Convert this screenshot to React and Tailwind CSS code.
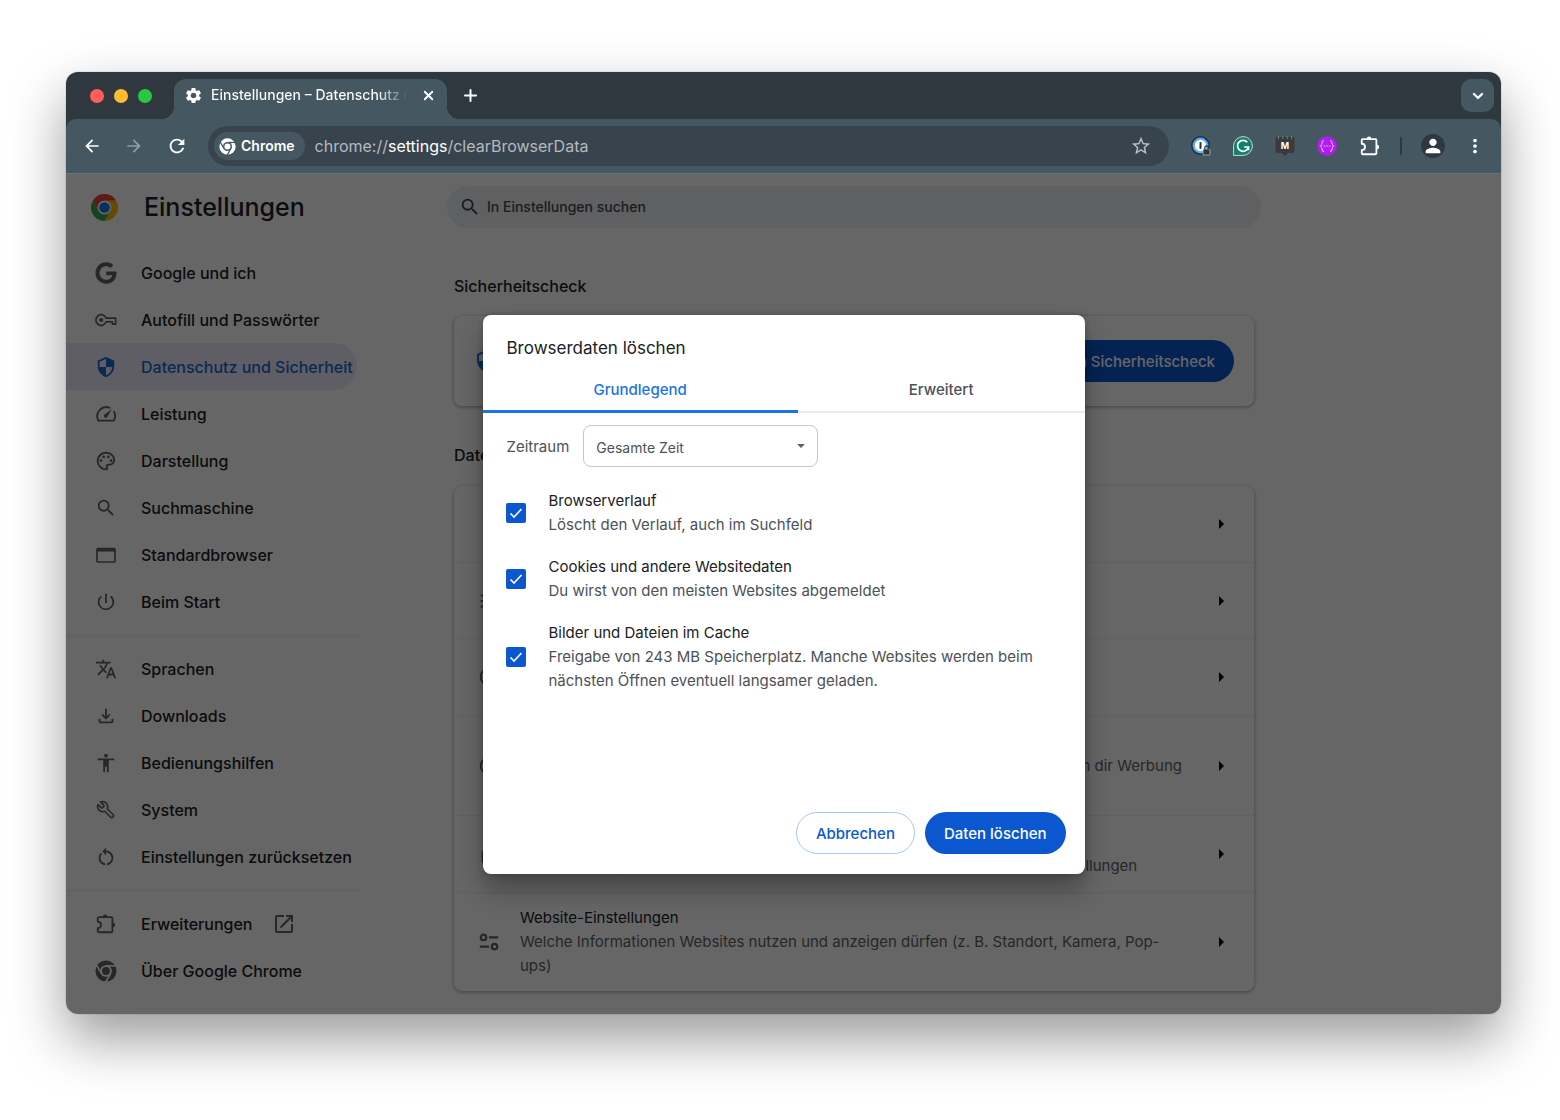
import { useState } from "react";
import {
  MdSettings, MdClose, MdAdd, MdArrowBack, MdArrowForward, MdRefresh, MdStarBorder, MdMoreVert,
  MdSearch, MdSecurity, MdOutlinePalette, MdPowerSettingsNew, MdTranslate,
  MdOutlineFileDownload, MdAccessibility, MdRestartAlt, MdOpenInNew,
  MdArrowRight, MdPerson, MdOutlineDelete, MdTune, MdAccessTime, MdLockOutline,
} from "react-icons/md";
import { FaGoogle } from "react-icons/fa";
import { LuChevronDown, LuPlus, LuWrench, LuX } from "react-icons/lu";

const ChromeMono = ({ className }) => (
  <svg viewBox="0 0 24 24" className={className}>
    <mask id="chrome-gaps">
      <circle cx="12" cy="12" r="11.500" fill="#fff" />
      <g stroke="#000" strokeWidth="1.800">
        <path d="M12 6.300h12" />
        <path d="M12 6.300h12" transform="rotate(120 12 12)" />
        <path d="M12 6.300h12" transform="rotate(240 12 12)" />
      </g>
      <circle cx="12" cy="12" r="6.400" fill="#000" />
      <circle cx="12" cy="12" r="4.300" fill="#fff" />
    </mask>
    <rect width="24" height="24" fill="currentColor" mask="url(#chrome-gaps)" />
  </svg>
);

const ChromeLogo = ({ className }) => (
  <svg viewBox="0 0 48 48" className={className}>
    <circle cx="24" cy="24" r="23" fill="#fff" />
    <path d="M3.200 12A24 24 0 0 1 44.800 12H24a12 12 0 0 0-10.400 18z" fill="#ea4335" />
    <path d="M44.800 12A24 24 0 0 1 24 48l10.400-18A12 12 0 0 0 24 12z" fill="#fbbc04" />
    <path d="M24 48A24 24 0 0 1 3.200 12l10.400 18A12 12 0 0 0 34.400 30z" fill="#34a853" />
    <circle cx="24" cy="24" r="12" fill="#fff" />
    <circle cx="24" cy="24" r="9.400" fill="#1a73e8" />
  </svg>
);

const PuzzleIcon = ({ className }) => (
  <svg viewBox="0 0 24 24" className={className} fill="none" stroke="currentColor" strokeWidth="2" strokeLinejoin="round">
    <path d="M4 4.500h14a1 1 0 0 1 1 1V20a1 1 0 0 1-1 1H4a1 1 0 0 1-1-1v-3.500c2 0 3.500-1.500 3.500-3.500S5 9.500 3 9.500v-4a1 1 0 0 1 1-1z" />
    <path d="M8.500 4a2.500 2.500 0 0 1 5 0zM19.500 10.500a2.500 2.500 0 0 1 0 5z" fill="currentColor" stroke="none" />
  </svg>
);

const KeyIcon = ({ className }) => (
  <svg viewBox="0 0 24 24" className={className} fill="none" stroke="currentColor" strokeWidth="1.800" strokeLinejoin="round">
    <path d="M12.200 10H22.500v6.500h-3.500V14h-6.800A5.800 5.800 0 1 1 12.200 10z" />
    <circle cx="6.800" cy="12" r="2.300" fill="currentColor" stroke="none" />
  </svg>
);

const SpeedIcon = ({ className }) => (
  <svg viewBox="0 0 24 24" className={className} fill="none" stroke="currentColor" strokeWidth="2" strokeLinecap="round">
    <path d="M16 5.200A10 10 0 0 0 3.600 19.200h16.800A10 10 0 0 0 20.800 9.500" />
    <path d="M18.500 6.500l-8 6a2 2 0 1 0 2.800 2.800z" fill="currentColor" stroke="none" />
  </svg>
);

const BrowserIcon = ({ className }) => (
  <svg viewBox="0 0 22 22" className={className} fill="none" stroke="currentColor" strokeWidth="1.700">
    <rect x="2" y="4.500" width="18" height="13.500" rx="1" />
    <path d="M2 6.300h18" strokeWidth="2.500" />
  </svg>
);

const WrenchIcon = ({ className }) => <LuWrench className={"-scale-x-100 p-px " + className} />;

const TuneIcon = ({ className }) => (
  <svg viewBox="0 0 24 24" className={className} fill="none" stroke="currentColor" strokeWidth="2.400">
    <circle cx="6" cy="7" r="3" />
    <path d="M12 7h10M2 17h10" />
    <circle cx="18" cy="17" r="3" />
  </svg>
);

const OnePasswordIcon = () => (
  <svg viewBox="0 0 20 20" className="size-5">
    <circle cx="9.500" cy="9.500" r="9.500" fill="#22303a" />
    <circle cx="9.500" cy="9.500" r="6.800" fill="#fff" stroke="#5aa9f8" strokeWidth="2.200" />
    <rect x="8.500" y="6" width="2" height="7" rx="1" fill="#22303a" />
    <rect x="12" y="13" width="7" height="6" rx="1" fill="#333" stroke="#dfe5e8" strokeWidth=".6" />
    <path d="M13.800 13v-1.500a1.700 1.700 0 0 1 3.400 0V13" fill="none" stroke="#333" strokeWidth="1.200" />
  </svg>
);

const GrammarlyIcon = () => (
  <svg viewBox="0 0 20 20" className="size-5">
    <path d="M.6 19.400V10A9.400 9.400 0 1 1 10 19.400z" fill="#0f806a" stroke="#c5d6d5" strokeWidth="1" />
    <path d="M14.300 6.300A5.500 5.500 0 1 0 15.400 11h-4.200M15.500 10.800v3.400" fill="none" stroke="#fff" strokeWidth="1.700" />
  </svg>
);

const MailIcon = () => (
  <span className="relative flex h-5 w-5 items-start justify-center">
    <svg viewBox="0 0 20 20" className="absolute inset-0">
      <path d="M1.500 1h17a1 1 0 0 1 1 1v13a2 2 0 0 1-2 2H13l-3 3-3-3H2.500a2 2 0 0 1-2-2V2a1 1 0 0 1 1-1z" fill="#3a3a3c" />
      <path d="M3.500 0v3M7.800 0v3M12.200 0v3M16.500 0v3" stroke="#747b80" strokeWidth="1" />
    </svg>
    <span className="relative text-[9px] leading-5 font-bold text-white">M</span>
  </span>
);

const BracesIcon = () => (
  <svg viewBox="0 0 20 20" className="size-5">
    <circle cx="10" cy="10" r="9.800" fill="#b01df0" />
    <path d="M7 4.500c-3 0-1 4.500-3.500 5.500C6 11 4 15.500 7 15.500M13 4.500c3 0 1 4.500 3.500 5.500-2.500 1-.5 5.500-3.500 5.500" fill="none" stroke="#e3a6ff" strokeWidth="1.100" />
    <path d="M6.500 10h7" stroke="#e3a6ff" strokeWidth="1.200" strokeDasharray="2 .8" />
  </svg>
);

const menu = [
  [
    { label: "Google und ich", icon: FaGoogle },
    { label: "Autofill und Passwörter", icon: KeyIcon },
    { label: "Datenschutz und Sicherheit", icon: MdSecurity, active: true },
    { label: "Leistung", icon: SpeedIcon },
    { label: "Darstellung", icon: MdOutlinePalette },
    { label: "Suchmaschine", icon: MdSearch },
    { label: "Standardbrowser", icon: BrowserIcon },
    { label: "Beim Start", icon: MdPowerSettingsNew },
  ],
  [
    { label: "Sprachen", icon: MdTranslate },
    { label: "Downloads", icon: MdOutlineFileDownload },
    { label: "Bedienungshilfen", icon: MdAccessibility },
    { label: "System", icon: WrenchIcon },
    { label: "Einstellungen zurücksetzen", icon: MdRestartAlt },
  ],
  [
    { label: "Erweiterungen", icon: PuzzleIcon, external: true },
    { label: "Über Google Chrome", icon: ChromeMono },
  ],
];

const options = [
  { id: "verlauf", title: "Browserverlauf", text: "Löscht den Verlauf, auch im Suchfeld" },
  { id: "cookies", title: "Cookies und andere Websitedaten", text: "Du wirst von den meisten Websites abgemeldet" },
  {
    id: "cache",
    title: "Bilder und Dateien im Cache",
    text: "Freigabe von 243 MB Speicherplatz. Manche Websites werden beim nächsten Öffnen eventuell langsamer geladen.",
  },
];

const TabStrip = () => (
  <div className="flex h-[47px] items-end bg-[#2e383e] pr-[7px] pl-6">
    <div className="flex h-full w-[84px] items-center gap-[10px]">
      <span className="size-[14px] rounded-full bg-[#ff5f57]" />
      <span className="size-[14px] rounded-full bg-[#febc2e]" />
      <span className="size-[14px] rounded-full bg-[#28c840]" />
    </div>
    <div className="relative flex h-10 w-[273px] items-center rounded-t-xl bg-[#455760] pb-2 pl-[10px] text-white">
      <span className="absolute bottom-0 -left-3 size-3 bg-[radial-gradient(circle_at_0_0,#2e383e_12px,#455760_12px)]" />
      <span className="absolute -right-3 bottom-0 size-3 bg-[radial-gradient(circle_at_100%_0,#2e383e_12px,#455760_12px)]" />
      <MdSettings className="size-[19px]" />
      <span className="ml-2 w-[196px] overflow-hidden bg-linear-to-r from-white from-85% to-transparent bg-clip-text text-sm font-medium whitespace-nowrap text-transparent">
        Einstellungen – Datenschutz und Sicherheit
      </span>
      <button aria-label="Tab schließen" className="ml-[14px]"><LuX className="size-[15px]" strokeWidth={3} /></button>
    </div>
    <button aria-label="Neuer Tab" className="mb-[14px] ml-[14px] text-white"><LuPlus className="size-[19px]" strokeWidth={2.5} /></button>
    <button aria-label="Tabs durchsuchen" className="mb-[7px] ml-auto flex size-[33px] items-center justify-center rounded-[10px] bg-[#455760] text-white">
      <LuChevronDown className="size-4" strokeWidth={3.5} />
    </button>
  </div>
);

const Toolbar = () => (
  <div className="bg-[#2e383e]">
    <div className="flex h-[55px] items-center rounded-t-[10px] border-b border-[#66737c] bg-[#455760] pr-[15px] pl-4 text-white">
      <button aria-label="Zurück"><MdArrowBack className="size-5" /></button>
      <button aria-label="Vor" className="ml-[22px] text-[#929ca2]"><MdArrowForward className="size-5" /></button>
      <button aria-label="Neu laden" className="ml-[22px]"><MdRefresh className="size-[22px]" /></button>
      <div className="ml-5 flex h-10 flex-1 items-center rounded-full bg-[#38444d] pr-[17px] pl-[6px]">
        <span className="flex h-7 items-center gap-[5px] rounded-full bg-[#455760] pr-[10px] pl-[5px] text-sm font-semibold">
          <ChromeMono className="size-[17px]" />
          Chrome
        </span>
        <span className="ml-[10px] flex-1 text-base text-[#b4babe]">
          chrome://<span className="text-white">settings</span>/clearBrowserData
        </span>
        <button aria-label="Lesezeichen" className="text-[#b9bfc3]"><MdStarBorder className="size-[22px]" /></button>
      </div>
      <div className="ml-[22px] flex items-center gap-[22px]">
        <OnePasswordIcon />
        <GrammarlyIcon />
        <MailIcon />
        <BracesIcon />
        <PuzzleIcon className="size-[22px]" />
      </div>
      <span className="ml-[19px] h-[18px] w-[2px] rounded-full bg-[#2e383e]" />
      <button aria-label="Profil" className="ml-[19px] flex size-6 items-center justify-center rounded-full bg-[#2e383e]">
        <MdPerson className="size-[22px]" />
      </button>
      <button aria-label="Menü" className="ml-[19px]"><MdMoreVert className="size-[22px]" /></button>
    </div>
  </div>
);

const Sidebar = () => (
  <aside className="w-[381px] shrink-0">
    <div className="flex h-[75px] items-center gap-[26px] pb-2 pl-[25px]">
      <ChromeLogo className="size-[27px]" />
      <h1 className="text-[25px] font-medium">Einstellungen</h1>
    </div>
    <nav className="w-[295px] text-base font-medium">
      {menu.map((group, i) => (
        <ul key={i} className={i > 0 ? "mt-[10px] border-t border-[#eff0f2] pt-[9px]" : ""}>
          {group.map(({ label, icon: Icon, active, external }) => (
            <li key={label}>
              <a
                href="#"
                className={
                  "mr-1 flex h-[47px] items-center rounded-r-full pl-[29px] whitespace-nowrap " +
                  (active ? "bg-[#eaecfb] text-[#1967d2]" : "")
                }
              >
                <Icon className={"size-[22px] shrink-0 " + (active ? "" : "text-[#5f6368]")} />
                <span className="ml-6">{label}</span>
                {external && <MdOpenInNew className="ml-5 size-6 text-[#5f6368]" />}
              </a>
            </li>
          ))}
        </ul>
      ))}
    </nav>
  </aside>
);

const Row = ({ icon: Icon, title, text, className }) => (
  <li className={"flex items-center border-t border-[#eff0f2] pr-6 pl-6 first:border-t-0 " + className}>
    <Icon className="size-[22px] shrink-0 text-[#5f6368]" />
    <div className="ml-5 w-[664px] leading-6">
      <p>{title}</p>
      <p className="text-[#5f6368]">{text}</p>
    </div>
    <MdArrowRight className="-mr-[3px] ml-auto size-6 shrink-0 text-black" />
  </li>
);

const Content = () => (
  <main className="max-w-[814px] min-w-0 flex-1 pt-3 pb-[23px]">
    <label className="flex h-[42px] items-center gap-[6px] rounded-full bg-[#edeff3] pl-3">
      <MdSearch className="size-[22px] text-[#474747]" />
      <input placeholder="In Einstellungen suchen" className="flex-1 text-sm font-medium outline-none placeholder:text-[#474747]" />
    </label>
    <div className="px-[7px] pt-[46px]">
      <h2 className="text-base leading-6 font-medium">Sicherheitscheck</h2>
      <section className="mt-[18px] flex h-[90px] items-center rounded-lg bg-white px-5 shadow-[0_1px_3px_1px_rgba(0,0,0,0.25)]">
        <MdSecurity className="size-6 text-[#1a73e8]" />
        <p className="ml-5">Chrome schützt dich</p>
        <button className="ml-auto h-[42px] rounded-full bg-[#0b57d0] px-[19px] pt-[3px] font-medium text-white">Zum Sicherheitscheck</button>
      </section>
      <h2 className="mt-[37px] text-base leading-6 font-medium">Datenschutz und Sicherheit</h2>
      <ul className="mt-[19px] rounded-lg bg-white shadow-[0_1px_3px_1px_rgba(0,0,0,0.25)]">
        <Row className="h-[76px]" icon={MdOutlineDelete} title="Browserdaten löschen" text="Verlauf, Cookies und Cache löschen" />
        <Row className="h-[76px]" icon={MdTune} title="Datenschutz-Leitfaden" text="Wichtige Einstellungen überprüfen" />
        <Row className="h-[77px]" icon={MdOutlinePalette} title="Drittanbieter-Cookies" text="Drittanbieter-Cookies sind blockiert" />
        <Row
          className="h-[100px]"
          icon={MdAccessTime}
          title="Datenschutz bei Werbung"
          text="Hier kannst du festlegen, welche Informationen Websites verwenden, von denen dir Werbung präsentiert wird"
        />
        <Row className="h-[77px]" icon={MdLockOutline} title="Sicherheit" text="Safe Browsing (Schutz vor schädlichen Websites) und weitere Sicherheitseinstellungen" />
        <Row
          className="h-[99px]"
          icon={TuneIcon}
          title="Website-Einstellungen"
          text="Welche Informationen Websites nutzen und anzeigen dürfen (z. B. Standort, Kamera, Pop-ups)"
        />
      </ul>
    </div>
  </main>
);

const ClearDataDialog = () => {
  const [checked, setChecked] = useState({ verlauf: true, cookies: true, cache: true });

  return (
    <div role="dialog" aria-label="Browserdaten löschen" className="flex h-[559px] w-[602px] flex-col rounded-lg bg-white shadow-[0_16px_24px_0_rgba(0,0,0,0.3),0_0_6px_rgba(0,0,0,0.2)]">
      <h2 className="px-6 pt-[21px] text-[17px] leading-6">Browserdaten löschen</h2>
      <div role="tablist" className="mt-[5px] flex h-12 border-b-2 border-[#e8eaed] font-medium">
        <button role="tab" aria-selected="true" className="-mb-[2px] flex-auto border-b-[3px] border-[#1a73e8] pt-[6px] text-[#1a73e8]">Grundlegend</button>
        <button role="tab" aria-selected="false" className="flex-auto pt-[6px] text-[#4d5156]">Erweitert</button>
      </div>
      <div className="mt-3 flex items-center px-6 text-[#4d5156]">
        <label htmlFor="zeitraum" className="pt-1">Zeitraum</label>
        <div className="relative ml-[14px]">
          <select id="zeitraum" className="h-[42px] w-[235px] appearance-none rounded-lg border border-[#c4c7c9] px-3 pt-1 text-sm">
            <option>Gesamte Zeit</option>
          </select>
          <svg viewBox="0 0 8 4" className="pointer-events-none absolute top-[19px] right-[13px] h-1 w-2"><path d="M0 0h8L4 4z" fill="#5f6368" /></svg>
        </div>
      </div>
      <div className="mt-[22px] flex flex-col gap-[18px] px-6 leading-6">
        {options.map((o) => (
          <label key={o.id} className="flex items-center">
            <span className="relative -ml-px size-5 shrink-0">
              <input
                type="checkbox"
                checked={checked[o.id]}
                onChange={() => setChecked({ ...checked, [o.id]: !checked[o.id] })}
                className="peer block size-5 appearance-none rounded-[2px] border-2 border-[#5f6368] checked:border-[#0b57d0] checked:bg-[#0b57d0]"
              />
              <svg viewBox="0 0 20 20" className="pointer-events-none absolute inset-0 hidden size-5 peer-checked:block" fill="none" stroke="#fff" strokeWidth="1.700">
                <path d="M4.500 10.500l3.500 3.500 7.500-8" />
              </svg>
            </span>
            <span className="ml-[23px]">
              <span className="block">{o.title}</span>
              <span className="block text-[#4d5156]">{o.text}</span>
            </span>
          </label>
        ))}
      </div>
      <div className="mt-auto flex justify-end gap-[10px] pr-[19px] pb-5 font-medium">
        <button className="h-[42px] rounded-full border border-[#a8c7fa] px-[19px] pt-[3px] text-[#0b57d0]">Abbrechen</button>
        <button className="h-[42px] rounded-full bg-[#0b57d0] px-[19px] pt-[3px] text-white">Daten löschen</button>
      </div>
    </div>
  );
};

export default function App() {
  return (
    <div className="min-h-screen bg-white pt-[72px] pr-[59px] pb-[106px] pl-[66px] font-['Inter',sans-serif] text-[15px] text-[#202124]">
      <div className="overflow-hidden rounded-xl shadow-[0_0_1px_rgba(0,0,0,0.6),0_25px_55px_rgba(0,0,0,0.4)]">
        <TabStrip />
        <Toolbar />
        <div className="relative">
          <div className="flex bg-white">
            <Sidebar />
            <Content />
          </div>
          <div className="absolute inset-0 flex items-center justify-center bg-black/60">
            <ClearDataDialog />
          </div>
        </div>
      </div>
    </div>
  );
}
